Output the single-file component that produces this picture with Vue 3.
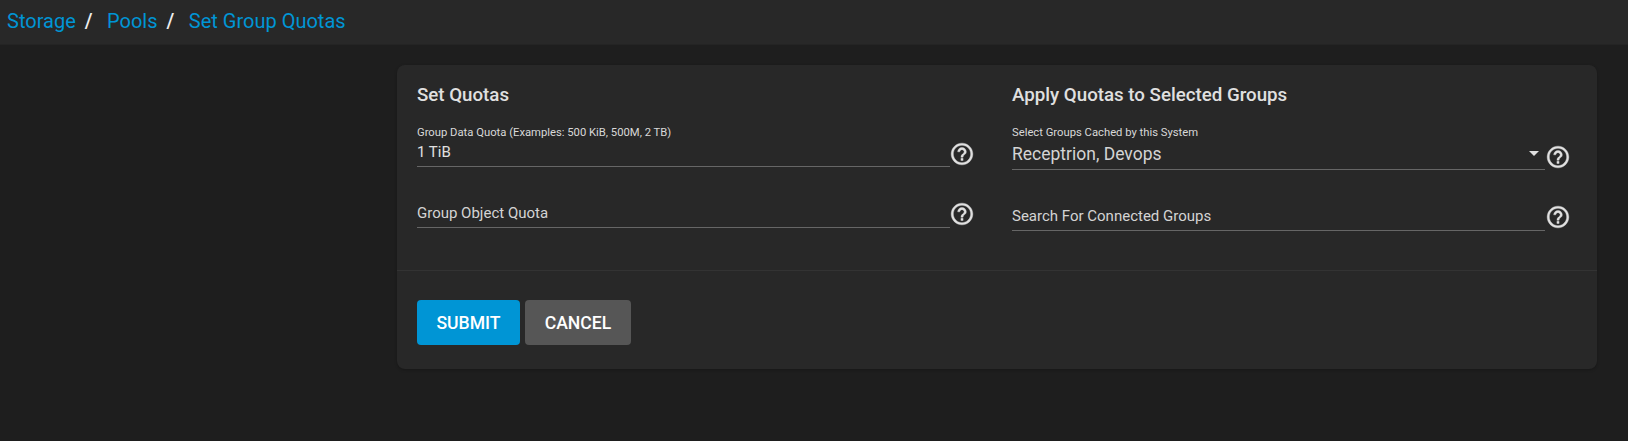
<script setup>
const crumbs = ['Storage', 'Pools', 'Set Group Quotas']
</script>

<template>
  <div class="page">
    <header class="topbar">
      <template v-for="(c, i) in crumbs" :key="c">
        <a class="crumb">{{ c }}</a>
        <span v-if="i < crumbs.length - 1" class="sep">/</span>
      </template>
    </header>
    <main class="content">
      <section class="card">
        <div class="columns">
          <div class="col">
            <h3>Set Quotas</h3>
            <div class="field first">
              <div class="control">
                <label>Group Data Quota (Examples: 500 KiB, 500M, 2 TB)</label>
                <div class="value small">1 TiB</div>
              </div>
              <svg class="help" viewBox="0 0 24 24"><path d="M11 18h2v-2h-2v2zm1-16C6.48 2 2 6.48 2 12s4.48 10 10 10 10-4.48 10-10S17.52 2 12 2zm0 18c-4.41 0-8-3.59-8-8s3.59-8 8-8 8 3.59 8 8-3.59 8-8 8zm0-14c-2.21 0-4 1.79-4 4h2c0-1.1.9-2 2-2s2 .9 2 2c0 2-3 1.75-3 5h2c0-2.25 3-2.5 3-5 0-2.21-1.79-4-4-4z"/></svg>
            </div>
            <div class="field second">
              <div class="control">
                <div class="value placeholder">Group Object Quota</div>
              </div>
              <svg class="help" viewBox="0 0 24 24"><path d="M11 18h2v-2h-2v2zm1-16C6.48 2 2 6.48 2 12s4.48 10 10 10 10-4.48 10-10S17.52 2 12 2zm0 18c-4.41 0-8-3.59-8-8s3.59-8 8-8 8 3.59 8 8-3.59 8-8 8zm0-14c-2.21 0-4 1.79-4 4h2c0-1.1.9-2 2-2s2 .9 2 2c0 2-3 1.75-3 5h2c0-2.25 3-2.5 3-5 0-2.21-1.79-4-4-4z"/></svg>
            </div>
          </div>
          <div class="col">
            <h3>Apply Quotas to Selected Groups</h3>
            <div class="field first">
              <div class="control">
                <label>Select Groups Cached by this System</label>
                <div class="value large">Receptrion, Devops<i class="arrow"></i></div>
              </div>
              <svg class="help" viewBox="0 0 24 24"><path d="M11 18h2v-2h-2v2zm1-16C6.48 2 2 6.48 2 12s4.48 10 10 10 10-4.48 10-10S17.52 2 12 2zm0 18c-4.41 0-8-3.59-8-8s3.59-8 8-8 8 3.59 8 8-3.59 8-8 8zm0-14c-2.21 0-4 1.79-4 4h2c0-1.1.9-2 2-2s2 .9 2 2c0 2-3 1.75-3 5h2c0-2.25 3-2.5 3-5 0-2.21-1.79-4-4-4z"/></svg>
            </div>
            <div class="field second">
              <div class="control">
                <div class="value placeholder">Search For Connected Groups</div>
              </div>
              <svg class="help" viewBox="0 0 24 24"><path d="M11 18h2v-2h-2v2zm1-16C6.48 2 2 6.48 2 12s4.48 10 10 10 10-4.48 10-10S17.52 2 12 2zm0 18c-4.41 0-8-3.59-8-8s3.59-8 8-8 8 3.59 8 8-3.59 8-8 8zm0-14c-2.21 0-4 1.79-4 4h2c0-1.1.9-2 2-2s2 .9 2 2c0 2-3 1.75-3 5h2c0-2.25 3-2.5 3-5 0-2.21-1.79-4-4-4z"/></svg>
            </div>
          </div>
        </div>
        <div class="actions">
          <button class="btn primary">SUBMIT</button>
          <button class="btn">CANCEL</button>
        </div>
      </section>
    </main>
  </div>
</template>

<style>
html, body { margin: 0; background: #1e1e1e; }
</style>

<style scoped>
.page { font-family: Roboto, "Liberation Sans", sans-serif; min-height: 441px; background: #1e1e1e; color: #e0e0e0; }
.topbar { height: 45px; box-sizing: border-box; background: #282828; display: flex; align-items: center; padding: 0 0 3px 7px; font-size: 20px; border-bottom: 1px solid #242424; }
.crumb { color: #0095d5; }
.sep { color: #eeeeee; font-weight: 500; margin: 0 14.5px 0 9px; }
.content { padding: 20px 31px 0 397px; }
.card { background: #282828; border-radius: 8px; height: 304px; box-shadow: 0 1px 3px rgba(0,0,0,.25); display: flex; flex-direction: column; }
.columns { display: flex; height: 205px; border-bottom: 1px solid #333; }
.col { width: 595px; padding: 20px 0 0 20px; box-sizing: border-box; }
h3 { margin: 0; font-size: 18.72px; line-height: 20px; font-weight: 500; color: #e0e0e0; }
.field { display: flex; width: 560px; align-items: flex-end; }
.control { width: 533px; flex: none; border-bottom: 1px solid #666; }
.first { margin-top: 22px; }
.second { margin-top: 32px; }
.second .help { margin-bottom: 1.5px; }
.col:first-child .help { margin-left: -1px; }
label { display: block; font-size: 11.25px; line-height: 12px; color: #d8d8d8; }
.value { font-size: 15px; line-height: 28px; color: #e0e0e0; position: relative; }
.value.small { line-height: 27px; }
.value.large { font-size: 17.5px; line-height: 30px; color: #d4d4d4; }
.placeholder { color: #d4d4d4; }
.arrow { position: absolute; right: 6px; top: 12px; width: 0; height: 0; border-left: 5px solid transparent; border-right: 5px solid transparent; border-top: 5px solid #e0e0e0; }
.help { width: 26px; height: 26px; fill: #e0e0e0; stroke: #e0e0e0; stroke-width: 0.35; flex: none; }
.actions { display: flex; gap: 5px; padding: 29px 0 0 20px; }
.btn { height: 45px; width: 106px; border: 0; border-radius: 4px; background: #565656; color: #fff; font: 500 17.6px Roboto, sans-serif; padding: 0; }
.btn.primary { width: 103px; background: #0095d5; }
</style>
